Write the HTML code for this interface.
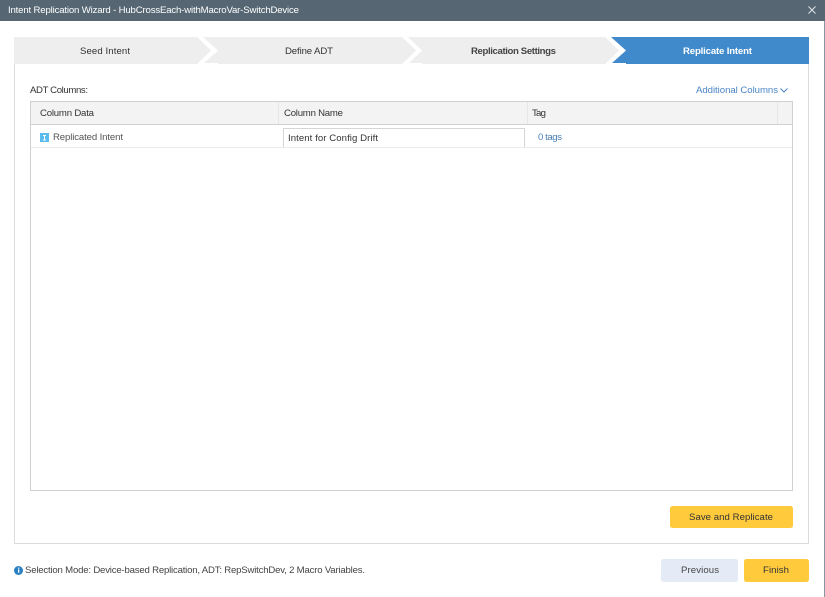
<!DOCTYPE html>
<html><head><meta charset="utf-8"><style>
html,body{margin:0;padding:0;background:#fff;width:825px;height:597px;overflow:hidden}
svg{display:block}
text{font-family:"Liberation Sans",sans-serif;font-size:9.6px;fill:#333}
</style></head><body>
<svg width="825" height="597" viewBox="0 0 825 597" xmlns="http://www.w3.org/2000/svg">
<rect width="825" height="597" fill="#fff"/>
<rect x="824" y="21" width="1" height="576" fill="#8a98a3"/>
<rect width="825" height="21" fill="#566773"/>
<text x="8" y="13" textLength="291" style="fill:#fff">Intent Replication Wizard - HubCrossEach-withMacroVar-SwitchDevice</text>
<path d="M808.5 6.5L815.5 13.5M815.5 6.5L808.5 13.5" stroke="#dfe4e8" stroke-width="1" fill="none"/>

<path d="M14.5 64V543.5H808.5V64" fill="#fff" stroke="#dcdcdc"/>
<polygon points="14,37 197,37 211,50.5 197,64 14,64" fill="#eeeeee"/>
<polygon points="203,37 402,37 416,50.5 402,64 218,64 218,63 204,63 218,50.5" fill="#eeeeee"/>
<polygon points="408,37 605,37 619,50.5 605,64 422,64 422,63 409,63 422,50.5" fill="#eeeeee"/>
<polygon points="611,37 809,37 809,64 626,64 626,63 612,63 626,50.5" fill="#408ACB"/>
<text x="80" y="54" textLength="50">Seed Intent</text>
<text x="285" y="54" textLength="48">Define ADT</text>
<text x="471" y="54" textLength="85" style="fill:#444;font-weight:700">Replication Settings</text>
<text x="683" y="54" textLength="69" style="fill:#fff;font-weight:700">Replicate Intent</text>

<text x="30" y="93" textLength="58">ADT Columns:</text>
<text x="696" y="93" textLength="82" style="fill:#4a85c2">Additional Columns</text>
<path d="M780.5 88.5L784 92L787.5 88.5" stroke="#4a85c2" fill="none"/>

<rect x="30.5" y="101.5" width="762" height="389" fill="#fff" stroke="#d0d0d0"/>
<rect x="31" y="102" width="761" height="22" fill="#f3f3f3"/>
<rect x="31" y="124" width="761" height="1" fill="#d0d0d0"/>
<rect x="278" y="102" width="1" height="22" fill="#e6e6e6"/>
<rect x="527" y="102" width="1" height="22" fill="#e6e6e6"/>
<rect x="777" y="102" width="1" height="22" fill="#e6e6e6"/>
<rect x="31" y="147" width="761" height="1" fill="#ebebeb"/>
<text x="40" y="116" textLength="54">Column Data</text>
<text x="284" y="116" textLength="59">Column Name</text>
<text x="532" y="116" textLength="14">Tag</text>

<rect x="40" y="133" width="9" height="9" fill="#5cbcee"/>
<path d="M43 135.5h3M43 140h3M44.5 135.5v4.5" stroke="#fff" stroke-width="1" fill="none"/>
<text x="53" y="140" textLength="70" style="fill:#555">Replicated Intent</text>
<path d="M283.5 147V128.5H524.5V147" fill="#fff" stroke="#d6d6d6"/>
<text x="288" y="141" textLength="90">Intent for Config Drift</text>
<text x="538" y="140" textLength="24" style="fill:#4a7fb5">0 tags</text>

<rect x="670" y="506" width="123" height="22" rx="2.5" fill="#FFCB3D"/>
<text x="689" y="520" textLength="84">Save and Replicate</text>
<rect x="661" y="559" width="77" height="23" rx="2.5" fill="#E4EBF7"/>
<text x="681" y="573" textLength="38" style="fill:#444">Previous</text>
<rect x="744" y="559" width="65" height="23" rx="2.5" fill="#FFCB3D"/>
<text x="763" y="573" textLength="26">Finish</text>

<circle cx="18.5" cy="570.5" r="4.5" fill="#2a80c0"/>
<rect x="18" y="569.5" width="1.3" height="3.2" fill="#fff"/>
<rect x="18" y="567.6" width="1.3" height="1.2" fill="#fff"/>
<text x="25" y="573" textLength="340" style="fill:#444">Selection Mode: Device-based Replication, ADT: RepSwitchDev, 2 Macro Variables.</text>
</svg>
</body></html>
